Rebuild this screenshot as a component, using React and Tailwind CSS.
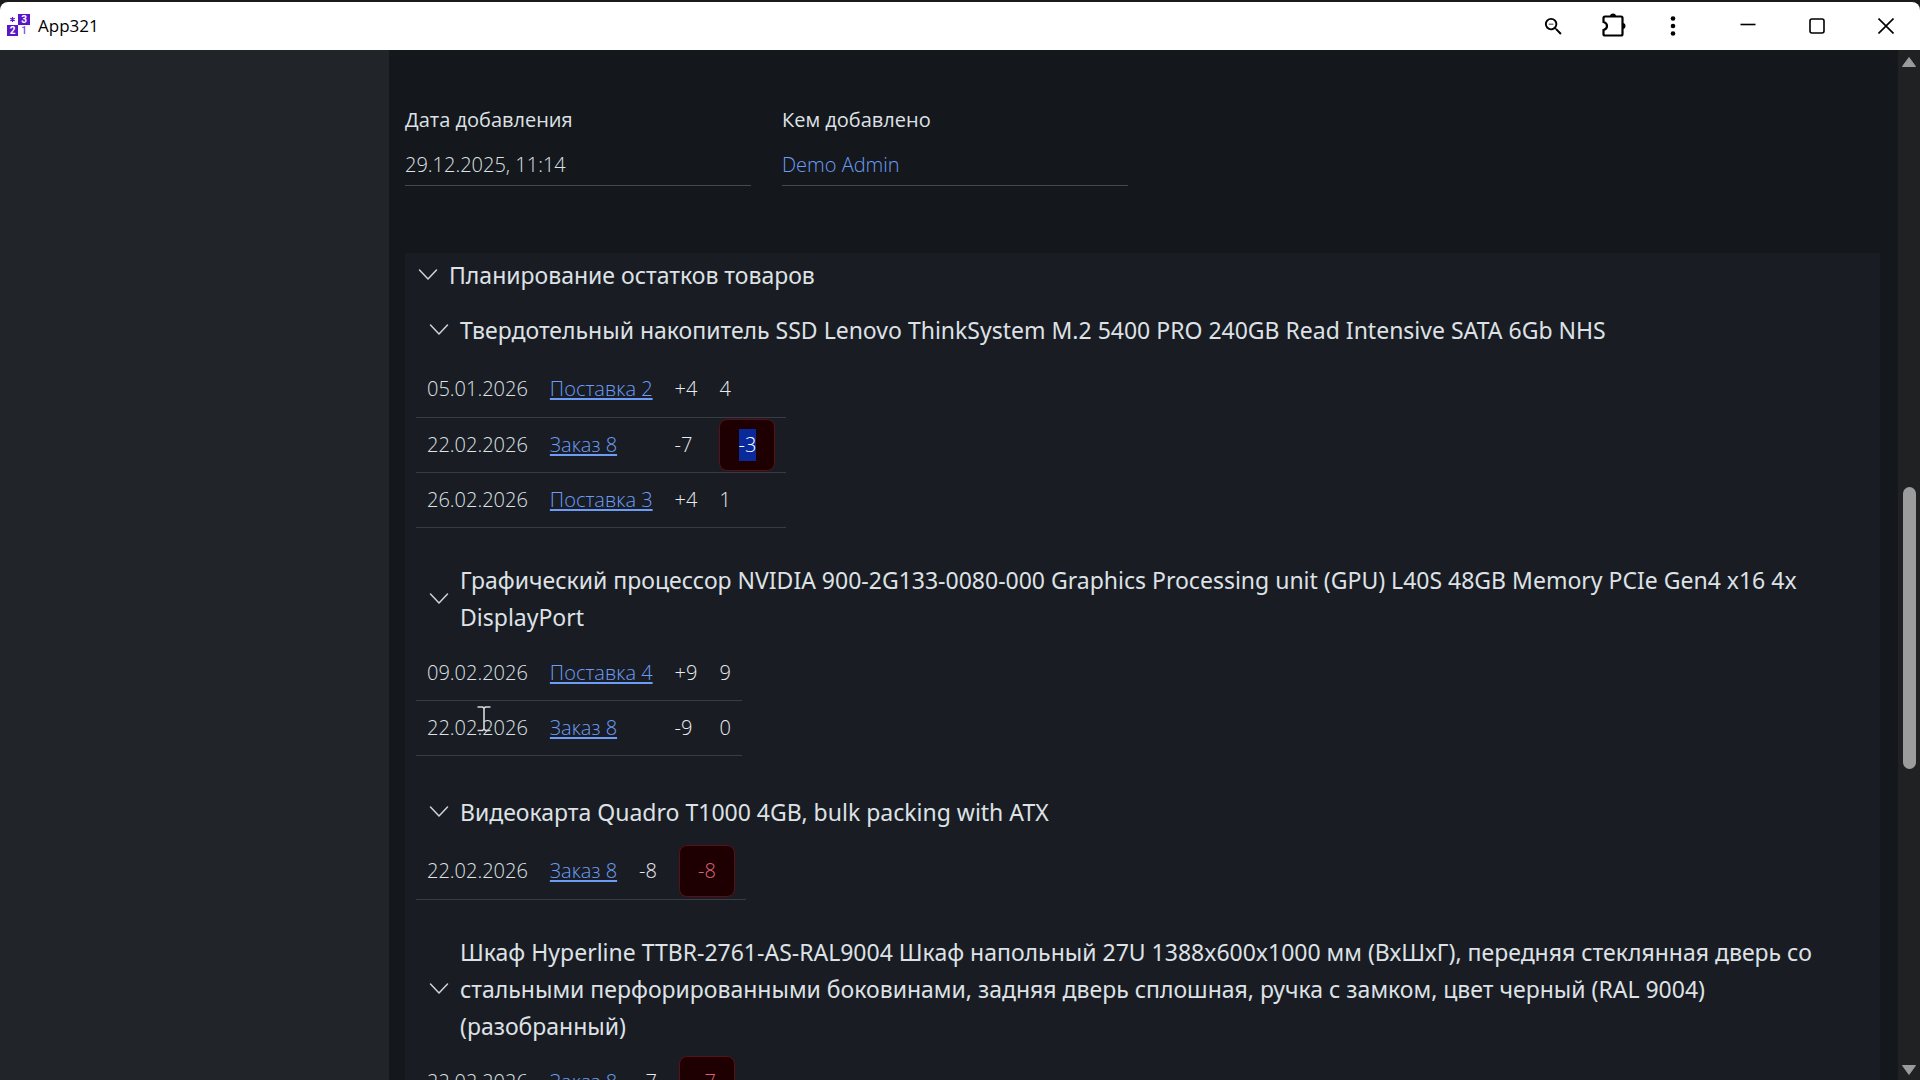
import React, { useState } from 'react';
import { MdZoomOut } from 'react-icons/md';

const groups = [
  {
    title: "Твердотельный накопитель SSD Lenovo ThinkSystem M.2 5400 PRO 240GB Read Intensive SATA 6Gb NHS",
    rows: [
      { date: "05.01.2026", doc: "Поставка 2", change: "+4", rest: "4" },
      { date: "22.02.2026", doc: "Заказ 8", change: "-7", rest: "-3", selected: true },
      { date: "26.02.2026", doc: "Поставка 3", change: "+4", rest: "1" },
    ],
  },
  {
    title: "Графический процессор NVIDIA 900-2G133-0080-000 Graphics Processing unit (GPU) L40S 48GB Memory PCIe Gen4 x16 4x DisplayPort",
    rows: [
      { date: "09.02.2026", doc: "Поставка 4", change: "+9", rest: "9" },
      { date: "22.02.2026", doc: "Заказ 8", change: "-9", rest: "0" },
    ],
  },
  {
    title: "Видеокарта Quadro T1000 4GB, bulk packing with ATX",
    rows: [{ date: "22.02.2026", doc: "Заказ 8", change: "-8", rest: "-8" }],
  },
  {
    title: "Шкаф Hyperline TTBR-2761-AS-RAL9004 Шкаф напольный 27U 1388x600x1000 мм (ВхШхГ), передняя стеклянная дверь со стальными перфорированными боковинами, задняя дверь сплошная, ручка с замком, цвет черный (RAL 9004) (разобранный)",
    rows: [{ date: "22.02.2026", doc: "Заказ 8", change: "-7", rest: "-7" }],
  },
];

const Logo = () => (
  <svg width="24" height="24" viewBox="0 0 24 24" fontFamily="Roboto, sans-serif" fontSize="10" fontWeight="700" textAnchor="middle">
    <rect x="11" y="0" width="12" height="11" fill="#5b16c9" />
    <rect x="0" y="11" width="11" height="11" fill="#5b16c9" />
    <text x="17" y="9" fill="#ffffff">3</text>
    <text x="5.5" y="20" fill="#ffffff">2</text>
    <text x="17" y="20" fill="#7a45d6" fontWeight="500">1</text>
    <path d="M5.5 3v5M3.3 4.2l4.4 2.6M7.7 4.2L3.3 6.8" stroke="#5b16c9" strokeWidth="1.2" />
  </svg>
);

const Chevron = () => (
  <svg width="20" height="20" viewBox="0 0 20 20" fill="none" stroke="#ced4da" strokeWidth="1.5" strokeLinecap="round" strokeLinejoin="round" className="shrink-0">
    <path d="M1.5 5L10 14L18.5 5" />
  </svg>
);

const TitleBar = () => (
  <header className="mt-0.5 flex h-12 shrink-0 items-center rounded-t-lg bg-white pl-[7px] text-black">
    <Logo />
    <h1 className="ml-[7px] text-[17px]">App321</h1>
    <div className="ml-auto flex items-center">
      <button type="button" aria-label="Масштаб" className="flex w-[60px] justify-center">
        <MdZoomOut size={23} />
      </button>
      <button type="button" aria-label="Расширения" className="flex w-[60px] justify-center">
        <svg width="26" height="26" viewBox="0 0 26 26">
          <path
            d="M5 3.500H21Q22.500 3.500 22.500 5V21Q22.500 22.500 21 22.500H5Q3.500 22.500 3.500 21V17Q7 16 7 13T3.500 9V5Q3.500 3.500 5 3.500Z"
            fill="none"
            stroke="#000"
            strokeWidth="2.200"
          />
          <path d="M10 3.500a3 3 0 0 1 6 0ZM22.500 10a3 3 0 0 1 0 6Z" />
        </svg>
      </button>
      <button type="button" aria-label="Меню" className="flex w-[60px] justify-center">
        <svg width="6" height="22" viewBox="0 0 6 22">
          <circle cx="3" cy="3.500" r="2.300" />
          <circle cx="3" cy="11" r="2.300" />
          <circle cx="3" cy="18.500" r="2.300" />
        </svg>
      </button>
      <button type="button" aria-label="Свернуть" className="ml-[10px] flex w-[69px] justify-center">
        <svg width="16" height="16" viewBox="0 0 16 16" stroke="#000" strokeWidth="1.600">
          <path d="M0.500 6.500H15.500" />
        </svg>
      </button>
      <button type="button" aria-label="Развернуть" className="flex w-[69px] justify-center">
        <svg width="16" height="16" viewBox="0 0 16 16" fill="none" stroke="#000" strokeWidth="1.600">
          <rect x="1" y="1" width="14" height="14" rx="2" />
        </svg>
      </button>
      <button type="button" aria-label="Закрыть" className="flex w-[69px] justify-center">
        <svg width="16" height="16" viewBox="0 0 16 16" stroke="#000" strokeWidth="1.600">
          <path d="M0.500 0.500L15.500 15.500M15.500 0.500L0.500 15.500" />
        </svg>
      </button>
    </div>
  </header>
);

const Field = ({ label, children }) => (
  <div className="w-[346px] border-b border-[#45494e]">
    <dt className="text-[20px] leading-[30px] text-[#dee2e6]">{label}</dt>
    <dd className="mt-[11px] pb-px text-[20px] leading-[38px] font-light text-[#dee2e6]">{children}</dd>
  </div>
);

const Rest = ({ row }) => {
  if (!row.rest.startsWith("-")) return row.rest;
  return (
    <span className="flex h-[52px] w-14 items-center justify-center rounded-lg border border-[#5a1018] bg-[#1e0002] text-[#dc6470]">
      {row.selected ? <mark className="bg-[#0a2a9c] leading-8 text-white">{row.rest}</mark> : row.rest}
    </span>
  );
};

const Group = ({ group }) => {
  const [open, setOpen] = useState(true);

  return (
    <section className="mb-[34px]">
      <button
        type="button"
        onClick={() => setOpen(!open)}
        className="flex min-h-11 w-full items-center gap-[11px] pr-[20px] pl-[13px] text-left font-['Noto_Sans',sans-serif] text-[23px] leading-[37px] text-[#dee2e6]"
      >
        <Chevron />
        <span>{group.title}</span>
      </button>
      {open && (
        <table className="mt-[10px] border-collapse text-[20px] font-light text-[#e9ecef]">
          <tbody>
            {group.rows.map((row) => (
              <tr key={row.date} className="h-[55px] border-b border-[#383d43]">
                <td className="px-[11px] py-0 text-[#dee2e6]">{row.date}</td>
                <td className="px-[11px] py-0">
                  <a href="#" className="text-[#6c9cf5] underline decoration-2 underline-offset-2">{row.doc}</a>
                </td>
                <td className="px-[11px] py-0">{row.change}</td>
                <td className="px-[11px] py-0">
                  <Rest row={row} />
                </td>
              </tr>
            ))}
          </tbody>
        </table>
      )}
    </section>
  );
};

const ScrollBar = () => (
  <div className="flex w-[22px] shrink-0 flex-col items-center bg-[#202122]">
    <svg width="16" height="24" viewBox="0 0 16 24" fill="#9b9b9b" className="shrink-0">
      <path d="M8 7.500L14.500 16.500H1.500Z" stroke="#9b9b9b" strokeLinejoin="round" />
    </svg>
    <div className="grow-[413]" />
    <div className="w-[13px] grow-[282] rounded-full bg-[#9b9c9b]" />
    <div className="grow-[287]" />
    <svg width="16" height="24" viewBox="0 0 16 24" fill="#9b9b9b" className="shrink-0">
      <path d="M8 18.500L14.500 9.500H1.500Z" stroke="#9b9b9b" strokeLinejoin="round" />
    </svg>
  </div>
);

const App = () => {
  const [open, setOpen] = useState(true);

  return (
    <div className="relative flex h-screen flex-col overflow-hidden bg-[#1c1b1b] font-['Open_Sans','Noto_Sans',sans-serif]">
      <TitleBar />
      <div className="flex min-h-0 flex-1">
        <aside className="w-[389px] shrink-0 bg-[#212429]" />
        <main className="min-w-0 flex-1 overflow-hidden bg-[#14171b] pt-[55px] pr-[18px] pl-4">
          <dl className="flex gap-[31px]">
            <Field label="Дата добавления">29.12.2025, 11:14</Field>
            <Field label="Кем добавлено">
              <a href="#" className="text-[#6c9cf5]">Demo Admin</a>
            </Field>
          </dl>

          <div className="mt-[67px] bg-[#191d23] pl-[11px]">
            <button
              type="button"
              onClick={() => setOpen(!open)}
              className="flex h-11 w-full items-center gap-[11px] pl-[2px] text-left font-['Noto_Sans',sans-serif] text-[23px] text-[#dee2e6]"
            >
              <Chevron />
              <span>Планирование остатков товаров</span>
            </button>
            {open && (
              <div className="pt-[11px]">
                {groups.map((group) => (
                  <Group key={group.title} group={group} />
                ))}
              </div>
            )}
          </div>
        </main>
        <ScrollBar />
      </div>

      {/* text cursor */}
      <svg width="14" height="26" viewBox="0 0 14 26" fill="none" stroke="#d9d9d9" strokeWidth="1.600" className="pointer-events-none absolute top-[706px] left-[477px]">
        <path d="M0.500 1H5.500L7 2L8.500 1H13.500M7 2V23M0.500 24.500H5.500L7 23L8.500 24.500H13.500" />
      </svg>
    </div>
  );
};

export default App;
